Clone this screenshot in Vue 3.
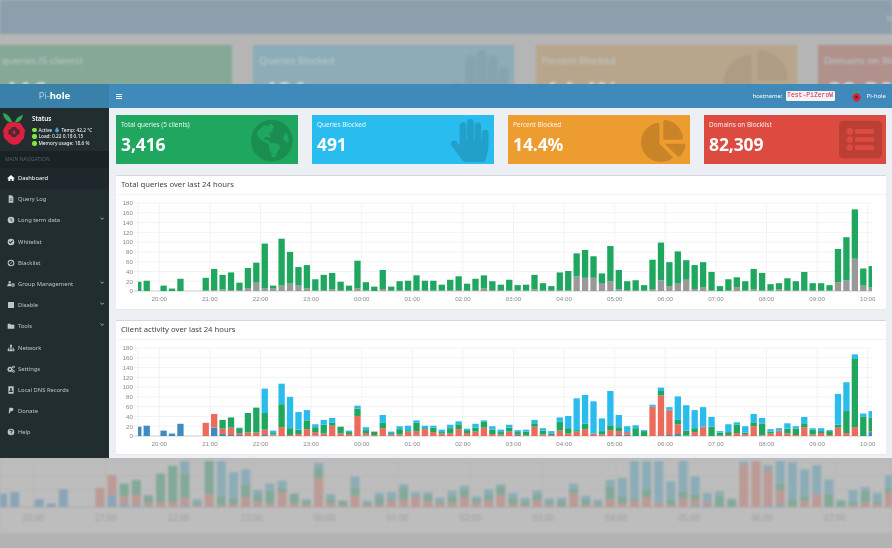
<template>
  <div class="stage">
    <!-- dimmed page behind the window -->
    <div class="backdrop" aria-hidden="true">
      <div class="bd_nav"><span class="bd_host">h</span></div>
      <div class="bd_cards">
        <div v-for="c in backCards" :key="c.label" class="bd_card" :class="c.cls">
          <div class="bd_label">{{ c.label }}</div>
          <div class="bd_num">{{ c.num }}</div>
          <svg v-if="c.d" class="bd_icon" :viewBox="c.vb"><path :d="c.d" /></svg>
        </div>
      </div>
      <div class="bd_chart">
        <svg width="892" height="72" viewBox="0 0 892 72">
          <line v-for="y in [1, 15, 29]" :key="y" x1="0" x2="892" :y1="y" :y2="y" class="bd_grid" />
          <line v-for="h in hours" :key="h.label" :x1="bdX(h.at)" :x2="bdX(h.at)" y1="0" y2="46" class="bd_grid" />
          <line x1="0" x2="892" y1="46" y2="46" class="bd_axis" />
          <rect
            v-for="(r, i) in backRects"
            :key="i"
            :x="r.x"
            :y="r.y"
            width="9"
            :height="r.h"
            :fill="r.fill"
          />
          <text v-for="h in hours" :key="h.label" :x="bdX(h.at)" y="60" text-anchor="middle" class="bd_tick">{{ h.label }}</text>
        </svg>
      </div>
      <div class="bd_foot" />
    </div>

    <!-- the admin window -->
    <div class="window">
      <header class="topbar">
        <div class="logo"><span>Pi-</span><b>hole</b></div>
        <div class="nav">
          <svg class="burger" viewBox="0 0 12 10"><path d="M0 0h12v2H0zM0 4h12v2H0zM0 8h12v2H0z" /></svg>
          <div class="nav_right">
            <span class="host_label">hostname:</span>
            <code class="host">Test-PiZeroW</code>
            <svg class="pi_small" viewBox="0 0 22 32">
              <path fill="#3db14b" d="M10 10C9 5 5 1 0 1c1 5 5 9 10 9zM12 9c1-4 4-7 9-8-1 5-4 8-9 8z" />
              <path fill="#d8203d" d="M11 8l7 3 4 8-3 8-8 5-7-5-4-8 4-8z" />
              <path fill="#4a2b30" d="M8 16h6v6H8z" />
            </svg>
            <span class="host_user">Pi-hole</span>
          </div>
        </div>
      </header>

      <div class="body">
        <aside class="side">
          <div class="panel">
            <svg class="pi" viewBox="0 0 22 32">
              <path fill="#2fa84f" d="M9.500 10C8 5 5 1 0 0c.5 5 3.500 9 9.500 10z" />
              <path fill="#2fa84f" d="M12 9.500c.5-3 3-6.500 8-7.500-1 4-3 7.500-8 7.500z" />
              <path fill="#dc1f3e" d="M11 9l6.500 1 4.500 7-1 8-5.500 6-4.500 1-5-2-5-5.500L0 17l4.500-7z" />
              <path fill="#4a2b30" d="M9 14h4l1 2 2.500 1v4L14 22l-1 2H9l-1-2-2.500-1v-4L8 16z" />
              <path fill="#dc1f3e" d="M9.800 17.500h2.400v3.500H9.800z" />
            </svg>
            <div class="panel_info">
              <div class="panel_title">Status</div>
              <div class="stat"><i class="dot" />Active
                <svg class="drop" viewBox="0 0 10 14"><path d="M5 0c2 4 5 6 5 9a5 5 0 0 1-10 0c0-3 3-5 5-9z" /></svg>
                Temp: 42.2 °C</div>
              <div class="stat"><i class="dot" />Load: 0.22 0.18 0.15</div>
              <div class="stat"><i class="dot" />Memory usage: 18.6 %</div>
            </div>
          </div>
          <div class="side_head">MAIN NAVIGATION</div>
          <ul class="menu">
            <li v-for="m in menu" :key="m.label" :class="{ active: m.active }">
              <svg class="m_icon" viewBox="0 0 24 24"><path :d="m.d" fill-rule="evenodd" /></svg>
              <span>{{ m.label }}</span>
              <svg v-if="m.sub" class="m_caret" viewBox="0 0 10 6"><path d="M1 1l4 4 4-4" /></svg>
            </li>
          </ul>
        </aside>

        <main class="content">
          <section class="kpis">
            <div v-for="c in cards" :key="c.label" class="kpi" :class="c.cls">
              <div class="kpi_label">{{ c.label }}</div>
              <div class="kpi_num">{{ c.num }}</div>
              <svg class="kpi_icon" :class="c.iconCls" :viewBox="c.vb"><path :d="c.d" /></svg>
            </div>
          </section>

          <section v-for="ch in charts" :key="ch.title" class="box">
            <h3 class="box_title">{{ ch.title }}</h3>
            <svg class="plot" width="770" height="114" viewBox="0 0 770 114">
              <line v-for="t in yTicks" :key="t.v" x1="18" x2="756" :y1="t.y" :y2="t.y" class="grid" />
              <line v-for="h in hours" :key="h.label" :x1="h.x" :x2="h.x" y1="8" y2="96" class="grid" />
              <line x1="22" x2="22" y1="8" y2="96" class="grid" />
              <line x1="18" x2="756" y1="96" y2="96" class="axis" />
              <rect
                v-for="(r, i) in ch.rects"
                :key="i"
                :x="r.x"
                :y="r.y"
                :width="r.w"
                :height="r.h"
                :fill="r.fill"
              />
              <text v-for="t in yTicks" :key="t.v" x="17" :y="t.y + 2.300" text-anchor="end" class="tick">{{ t.v }}</text>
              <text v-for="h in hours" :key="h.label" :x="h.x" y="106" text-anchor="middle" class="tick">{{ h.label }}</text>
            </svg>
          </section>
        </main>
      </div>
    </div>
  </div>
</template>

<script setup>
const total = [
  19, 21, 0, 11, 5, 25, 0, 0, 27, 45, 33, 38, 17, 47, 58, 97, 11, 107, 80, 49, 53, 24,
  33, 37, 19, 11, 62, 18, 9, 43, 9, 20, 21, 32, 21, 21, 13, 23, 30, 15, 25, 32, 20, 13,
  23, 12, 13, 33, 16, 10, 38, 41, 77, 84, 71, 36, 92, 43, 20, 22, 12, 64, 99, 59, 81, 63,
  53, 59, 39, 10, 24, 28, 20, 45, 37, 14, 16, 26, 20, 39, 16, 16, 12, 86, 110, 167, 46, 51,
];
const blocked = [
  0, 0, 0, 0, 0, 0, 0, 0, 1, 2, 3, 2, 2, 6, 17, 5, 5, 11, 15, 11, 5, 1,
  1, 3, 1, 1, 5, 1, 0, 4, 1, 1, 1, 2, 1, 1, 1, 1, 2, 1, 1, 5, 2, 1,
  1, 1, 1, 3, 1, 1, 2, 1, 30, 27, 27, 15, 20, 3, 2, 1, 1, 4, 22, 10, 15, 23,
  4, 8, 2, 0, 1, 8, 1, 3, 1, 1, 3, 1, 1, 1, 2, 1, 1, 18, 22, 66, 11, 7,
];
// blue, red, green per bar; the rest of the total is cyan
const clients = [
  [19, 0, 0], [21, 0, 0], [0, 0, 0], [11, 0, 0], [5, 0, 0], [25, 0, 0], [0, 0, 0], [0, 0, 0],
  [0, 27, 0], [17, 28, 0], [4, 11, 18], [2, 15, 21], [2, 4, 10], [0, 7, 40], [0, 7, 51], [2, 11, 34],
  [1, 2, 3], [0, 18, 47], [0, 2, 14], [0, 4, 9], [0, 14, 18], [1, 7, 10], [0, 5, 18], [0, 21, 6],
  [0, 5, 14], [0, 4, 4], [0, 41, 15], [1, 5, 6], [0, 2, 7], [0, 16, 11], [0, 3, 3], [0, 3, 11],
  [0, 9, 3], [1, 9, 17], [0, 14, 2], [0, 8, 9], [0, 5, 3], [0, 5, 11], [0, 14, 10], [0, 6, 6],
  [0, 9, 8], [0, 17, 12], [0, 4, 9], [0, 3, 5], [0, 9, 8], [2, 2, 4], [0, 1, 8], [0, 19, 7],
  [0, 3, 8], [0, 2, 3], [0, 11, 18], [0, 5, 11], [0, 9, 3], [0, 14, 11], [0, 5, 0], [0, 3, 7],
  [0, 12, 10], [2, 8, 8], [3, 5, 0], [0, 0, 16], [0, 0, 10], [0, 60, 0], [0, 83, 9], [2, 50, 2],
  [4, 20, 9], [0, 1, 10], [0, 8, 8], [0, 18, 1], [0, 0, 19], [1, 0, 6], [0, 2, 6], [0, 6, 17],
  [0, 4, 3], [0, 20, 8], [1, 1, 23], [0, 5, 4], [0, 10, 1], [0, 5, 10], [0, 2, 13], [0, 18, 8],
  [0, 3, 10], [0, 6, 4], [0, 2, 8], [0, 17, 6], [0, 6, 45], [0, 18, 141], [0, 0, 40], [8, 2, 27],
];

const BASE = 96;
const UNIT = 88 / 180;
const STEP = 8.43;
const LEFT = 22;
const RIGHT = 756;

const stackRects = (rows, colors) => {
  const out = [];
  rows.forEach((row, i) => {
    const cx = LEFT + 0.3 + i * STEP;
    const x0 = Math.max(LEFT, cx - 3.15);
    const x1 = Math.min(RIGHT, cx + 3.15);
    let y = BASE;
    row.forEach((v, s) => {
      if (!v) return;
      const h = v * UNIT;
      y -= h;
      out.push({ x: x0, y, w: x1 - x0, h, fill: colors[s] });
    });
  });
  return out;
};

const queryRows = total.map((t, i) => [blocked[i], t - blocked[i]]);
const clientRows = total.map((t, i) => {
  const [b, r, g] = clients[i];
  return [b, r, g, Math.max(0, t - b - r - g)];
});

const charts = [
  { title: "Total queries over last 24 hours", rects: stackRects(queryRows, ["#999999", "#1fa65f"]) },
  { title: "Client activity over last 24 hours", rects: stackRects(clientRows, ["#3f8bbd", "#ed6b5b", "#1fa65f", "#2bbcee"]) },
];

const yTicks = [180, 160, 140, 120, 100, 80, 60, 40, 20, 0].map((v) => ({ v, y: BASE - v * UNIT }));

const hourLabels = ["20:00", "21:00", "22:00", "23:00", "00:00", "01:00", "02:00", "03:00", "04:00", "05:00", "06:00", "07:00", "08:00", "09:00", "10:00"];
const hours = hourLabels.map((label, i) => ({ label, at: i, x: 43.3 + i * 50.6 }));

// the page behind is the same chart, larger
const bdX = (hour) => 33 + hour * 72.9;
const backColors = ["#8ba5b8", "#bc9a96", "#83a998", "#8cadb8"];
const backRects = [];
clientRows.forEach((row, i) => {
  const x = 33 + (i - 2.5) * 12.15 - 4.5;
  let y = 46;
  row.forEach((v, s) => {
    if (!v) return;
    const h = v * 0.71;
    y -= h;
    backRects.push({ x, y, h, fill: backColors[s] });
  });
});

const globe = "M248 8C111.03 8 0 119.03 0 256s111.03 248 248 248 248-111.03 248-248S384.97 8 248 8zm82.29 357.6c-3.9 3.88-7.99 7.95-11.31 11.28-2.99 3-5.1 6.7-6.17 10.71-1.51 5.66-2.73 11.38-4.77 16.87l-17.39 46.85c-13.76 3-28 4.69-42.65 4.69v-27.38c1.69-12.62-7.64-36.26-22.63-51.25-6-6-9.37-14.14-9.37-22.63v-32.01c0-11.64-6.27-22.34-16.46-27.97-14.37-7.95-34.81-19.06-48.81-26.11-11.48-5.78-22.1-13.14-31.65-21.75l-.8-.72a114.792 114.792 0 0 1-18.06-20.74c-9.38-13.77-24.66-36.42-34.59-51.14 20.47-45.5 57.36-82.04 103.2-101.89l24.01 12.01C203.48 89.74 216 82.01 216 70.11v-11.3c7.99-1.29 16.12-2.11 24.48-2.46l28.3 28.3c6.25 6.25 6.25 16.38 0 22.63L264 112l-10.34 10.34c-3.12 3.12-3.12 8.19 0 11.31l4.69 4.69c3.12 3.12 3.12 8.19 0 11.31l-8 8a8.008 8.008 0 0 1-5.66 2.34h-8.99c-2.08 0-4.08.81-5.58 2.27l-9.92 9.65a8.008 8.008 0 0 0-1.58 9.31l15.59 31.19c2.66 5.32-1.21 11.58-7.15 11.58h-5.64c-1.93 0-3.79-.7-5.24-1.96l-9.28-8.06a16.017 16.017 0 0 0-15.55-3.1l-31.17 10.39a11.95 11.95 0 0 0-8.17 11.34c0 4.53 2.56 8.66 6.61 10.69l11.08 5.54c9.41 4.71 19.79 7.16 30.31 7.16s22.59 27.29 32 32h66.75c8.49 0 16.62 3.37 22.63 9.37l13.69 13.69a30.503 30.503 0 0 1 8.93 21.57 46.536 46.536 0 0 1-13.72 32.98zM417 274.25c-5.79-1.45-10.84-5-14.15-9.97l-17.98-26.97a23.97 23.97 0 0 1 0-26.62l19.59-29.38c2.32-3.47 5.5-6.29 9.24-8.15l12.98-6.49C440.2 193.59 448 223.87 448 256c0 8.67-.74 17.16-1.82 25.54L417 274.25z";
const hand = "M408.781 128.007C386.356 127.578 368 146.36 368 168.79V256h-8V79.79c0-22.43-18.356-41.212-40.781-40.783C297.488 39.423 280 57.169 280 79v177h-8V40.79C272 18.36 253.644-.422 231.219.007 209.488.423 192 18.169 192 40v216h-8V80.79c0-22.43-18.356-41.212-40.781-40.783C121.488 40.423 104 58.169 104 80v235.992l-31.648-43.519c-12.993-17.866-38.009-21.817-55.877-8.823-17.865 12.994-21.815 38.01-8.822 55.877l125.601 172.705A48 48 0 0 0 171.073 512h197.59c22.274 0 41.622-15.324 46.724-37.006l26.508-112.66a192.011 192.011 0 0 0 5.104-43.975V168c.001-21.831-17.487-39.577-39.218-39.993z";
const pie = "M527.79 288H290.5l158.03 158.03c6.04 6.04 15.98 6.53 22.19.68 38.7-36.46 65.32-85.61 73.13-140.86 1.34-9.46-6.51-17.85-16.06-17.85zm-15.83-64.8C503.72 103.74 408.26 8.28 288.8.04 279.68-.59 272 7.1 272 16.24V240h223.77c9.14 0 16.82-7.68 16.19-16.8zM224 288V50.71c0-9.55-8.39-17.4-17.84-16.06C86.99 51.49-4.1 155.6.14 280.37 4.5 408.51 114.83 513.59 243.03 511.98c50.4-.63 96.97-16.87 135.26-44.03 7.9-5.6 8.42-17.23 1.57-24.08L224 288z";
const listAlt = "M464 480H48c-26.51 0-48-21.49-48-48V80c0-26.51 21.49-48 48-48h416c26.51 0 48 21.49 48 48v352c0 26.51-21.49 48-48 48zM128 120c-22.091 0-40 17.909-40 40s17.909 40 40 40 40-17.909 40-40-17.909-40-40-40zm0 96c-22.091 0-40 17.909-40 40s17.909 40 40 40 40-17.909 40-40-17.909-40-40-40zm0 96c-22.091 0-40 17.909-40 40s17.909 40 40 40 40-17.909 40-40-17.909-40-40-40zm288-136v-32c0-6.627-5.373-12-12-12H204c-6.627 0-12 5.373-12 12v32c0 6.627 5.373 12 12 12h200c6.627 0 12-5.373 12-12zm0 96v-32c0-6.627-5.373-12-12-12H204c-6.627 0-12 5.373-12 12v32c0 6.627 5.373 12 12 12h200c6.627 0 12-5.373 12-12zm0 96v-32c0-6.627-5.373-12-12-12H204c-6.627 0-12 5.373-12 12v32c0 6.627 5.373 12 12 12h200c6.627 0 12-5.373 12-12z";

const cards = [
  { label: "Total queries (5 clients)", num: "3,416", cls: "green", vb: "0 0 496 512", d: globe, iconCls: "i_globe" },
  { label: "Queries Blocked", num: "491", cls: "aqua", vb: "0 0 448 512", d: hand, iconCls: "i_hand" },
  { label: "Percent Blocked", num: "14.4%", cls: "amber", vb: "0 0 544 512", d: pie, iconCls: "i_pie" },
  { label: "Domains on Blocklist", num: "82,309", cls: "red", vb: "0 0 512 512", d: listAlt, iconCls: "i_list" },
];

const backCards = [
  { label: "Total queries (5 clients)", num: "3,416", cls: "bd_green" },
  { label: "Queries Blocked", num: "491", cls: "bd_aqua", vb: "0 0 448 512", d: hand },
  { label: "Percent Blocked", num: "14.4%", cls: "bd_amber", vb: "0 0 544 512", d: pie },
  { label: "Domains on Blocklist", num: "82,309", cls: "bd_red" },
];

const gear = (cx, cy, r) => {
  let d = "";
  const n = 8;
  for (let i = 0; i < n * 2; i++) {
    const a = (i * Math.PI) / n;
    const rad = i % 2 ? r * 0.78 : r;
    d += `${i ? "L" : "M"}${(cx + rad * Math.cos(a)).toFixed(1)} ${(cy + rad * Math.sin(a)).toFixed(1)}`;
  }
  const hole = r * 0.34;
  return `${d}zM${cx - hole} ${cy}a${hole} ${hole} 0 1 0 ${hole * 2} 0a${hole} ${hole} 0 1 0 ${-hole * 2} 0z`;
};

const menu = [
  { label: "Dashboard", active: true, d: "M12 3 1 12.500l1.500 1.700L4 13v8h6v-6h4v6h6v-8l1.500 1.200 1.500-1.700z" },
  { label: "Query Log", d: "M5 1h9l5 5v17H5zM8 11v1.500h8V11zM8 15v1.500h8V15z" },
  { label: "Long term data", sub: true, d: "M12 2a10 10 0 1 0 0 20 10 10 0 0 0 0-20zM11 6h2v6l4 3-1 1.500-5-3.500z" },
  { label: "Whitelist", d: "M12 2a10 10 0 1 0 0 20 10 10 0 0 0 0-20zM10.500 17l-5-5 2-2 3 3 6-6 2 2z" },
  { label: "Blacklist", d: "M12 2a10 10 0 1 0 0 20 10 10 0 0 0 0-20zm0 3a7 7 0 0 1 4.200 1.400L6.400 16.200A7 7 0 0 1 12 5zm0 14a7 7 0 0 1-4.200-1.400l9.800-9.800A7 7 0 0 1 12 19z" },
  { label: "Group Management", sub: true, d: "M8 3a3.500 3.500 0 1 0 0 7 3.500 3.500 0 0 0 0-7zM1 19v-3c0-3 3-5 7-5 2 0 3 .5 4 1v7zM" + gear(18, 15, 6).slice(1) },
  { label: "Disable", sub: true, d: "M4 3h16a1 1 0 0 1 1 1v16a1 1 0 0 1-1 1H4a1 1 0 0 1-1-1V4a1 1 0 0 1 1-1z" },
  { label: "Tools", sub: true, d: "M2 5h8l2 3h10v12H2z" },
  { label: "Network", d: "M9 2h6v6h-1.500v3H20v5h2v6h-6v-6h2v-3h-5v3h2v6H9v-6h2v-3H6v3h2v6H2v-6h2v-5h6.500V8H9z" },
  { label: "Settings", d: gear(9, 13, 9) + gear(19.5, 6, 4.5) + gear(19.5, 19, 4.5) },
  { label: "Local DNS Records", d: "M4 1h16v22H4zM12 6a3 3 0 1 0 0 6 3 3 0 0 0 0-6zM7 18h10v-2c0-1.500-2-3-5-3s-5 1.500-5 3z" },
  { label: "Donate", d: "M7 2h7c4 0 6 2 5 6-1 4-4 5-7 5h-2l-1 6H5z" },
  { label: "Help", d: "M12 2a10 10 0 1 0 0 20 10 10 0 0 0 0-20zM11 15h2.500v-1c0-1 3.500-2 3.500-5s-2.500-4-5-4-4.500 1.500-5 4l2.500.5c.3-1.500 1-2.300 2.500-2.300s2.300.7 2.300 1.800c0 2-3.300 2.500-3.300 5zM11 16.500V19h2.500v-2.500z" },
];
</script>

<style scoped>
.stage {
  position: relative;
  width: 892px;
  height: 548px;
  overflow: hidden;
  background: #b5b5b5;
  font-family: "Noto Sans", "Open Sans", sans-serif;
}

/* page behind */
.backdrop {
  position: absolute;
  inset: 0;
  display: flex;
  flex-direction: column;
  filter: blur(0.8px);
}
.bd_nav {
  height: 34px;
  flex: none;
  background: #8c9fac;
  position: relative;
}
.bd_host {
  position: absolute;
  right: 0;
  top: 12px;
  color: #b9c4cc;
  font-size: 9px;
}
.bd_cards {
  display: grid;
  grid-template-columns: 261px 261px 261px 261px;
  gap: 21.300px;
  margin: 11px 0 0 -29px;
  height: 80px;
  flex: none;
}
.bd_card {
  position: relative;
  overflow: hidden;
  height: 80px;
}
.bd_green { background: #85a897; }
.bd_aqua { background: #8cadb8; }
.bd_amber { background: #b8a68c; }
.bd_red { background: #b0918c; }
.bd_label {
  margin: 8px 0 0 6px;
  font-size: 9.800px;
  line-height: 15px;
  color: #bccac8;
}
.bd_num {
  margin: 5px 0 0 9px;
  font-size: 26px;
  font-weight: 700;
  line-height: 36px;
  color: #d5d5d5;
}
.bd_icon {
  position: absolute;
  right: 5px;
  top: 5px;
  height: 65px;
  fill: rgba(0, 0, 0, 0.05);
}
.bd_chart {
  flex: none;
  margin-top: 333px;
  height: 75px;
  background: #bdbdbd;
  overflow: hidden;
}
.bd_chart svg { display: block; margin-top: 3px; }
.bd_grid { stroke: #b9b7b5; stroke-width: 1; }
.bd_axis { stroke: #a8a8a8; stroke-width: 1; }
.bd_tick { font-size: 8.500px; fill: #a0a0a0; font-family: "Noto Sans", sans-serif; }
.bd_foot {
  flex: 1;
  background: #b3b3b3;
}

/* window */
.window {
  position: absolute;
  left: 0;
  right: 0;
  top: 84px;
  height: 374px;
  display: flex;
  flex-direction: column;
  background: #ecf0f5;
  filter: blur(0.4px);
}
.topbar {
  display: flex;
  height: 24px;
  flex: none;
  color: #fff;
}
.logo {
  width: 109px;
  flex: none;
  background: #3a81a9;
  text-align: center;
  font-size: 9.500px;
  line-height: 24px;
}
.logo span { font-weight: 300; opacity: 0.85; }
.nav {
  flex: 1;
  display: flex;
  align-items: center;
  justify-content: space-between;
  background: #3f8abb;
  padding: 0 6px 0 7px;
}
.burger {
  width: 6px;
  height: 5px;
  fill: #fff;
}
.nav_right {
  display: flex;
  align-items: center;
  font-size: 6px;
}
.host {
  margin-left: 3px;
  padding: 1.500px 1.500px;
  background: #f9f2f4;
  color: #c7254e;
  font-family: "Liberation Mono", monospace;
  font-size: 6.400px;
  line-height: 6.500px;
  border-radius: 1px;
}
.pi_small {
  width: 9px;
  height: 12px;
  margin: 0 6px 0 17px;
}

.body {
  flex: 1;
  display: flex;
  min-height: 0;
}
.side {
  width: 109px;
  flex: none;
  background: #222d30;
  color: #b8c7ce;
}
.panel {
  height: 42.500px;
  display: flex;
  padding: 5px 0 0 3px;
  box-sizing: border-box;
}
.pi {
  width: 22px;
  height: 32px;
  flex: none;
}
.panel_info {
  margin-left: 7px;
  padding-top: 1px;
  color: #fff;
}
.panel_title {
  font-size: 6.300px;
  font-weight: 600;
  line-height: 10px;
  margin-bottom: 2.500px;
}
.stat {
  display: flex;
  align-items: center;
  font-size: 4.800px;
  line-height: 6.800px;
  white-space: pre;
}
.dot {
  width: 4.500px;
  height: 4.500px;
  border-radius: 50%;
  background: #7ced3f;
  margin-right: 2px;
}
.drop {
  width: 4px;
  height: 5.500px;
  fill: #4a9fd6;
  margin: 0 1.500px;
}
.side_head {
  height: 17px;
  background: #1a2226;
  color: #4b646f;
  font-size: 5px;
  line-height: 17px;
  padding-left: 5px;
}
.menu {
  list-style: none;
  margin: 0;
  padding: 0;
}
.menu li {
  height: 21.200px;
  display: flex;
  align-items: center;
  padding: 0 5px 0 6.500px;
  font-size: 5.800px;
  position: relative;
}
.menu li.active {
  background: #1e282c;
  color: #fff;
}
.m_icon {
  width: 8px;
  height: 8px;
  fill: currentColor;
  margin-right: 3.500px;
  flex: none;
}
.m_caret {
  width: 4.500px;
  height: 3px;
  fill: none;
  stroke: currentColor;
  stroke-width: 1.800;
  margin-left: auto;
  margin-top: -3px;
}

.content {
  flex: 1;
  min-width: 0;
  padding: 7px 6px 0 7px;
}
.kpis {
  display: grid;
  grid-template-columns: repeat(4, 1fr);
  gap: 14px;
  margin-bottom: 11px;
}
.kpi {
  position: relative;
  height: 49px;
  color: #fff;
  padding: 5px 0 0 5px;
  box-sizing: border-box;
  overflow: hidden;
}
.green { background: #1fa65f; }
.aqua { background: #29bcee; }
.amber { background: #ed9c30; }
.red { background: #dd4b40; }
.kpi_label {
  font-size: 6.400px;
  line-height: 10px;
  opacity: 0.9;
}
.kpi_num {
  font-size: 17.500px;
  font-weight: 700;
  line-height: 25px;
  margin-top: 2px;
  letter-spacing: -0.1px;
}
.kpi_icon {
  position: absolute;
  fill: rgba(0, 0, 0, 0.15);
}
.i_globe { right: 5px; top: 4px; height: 43px; }
.i_hand { right: 5px; top: 4px; height: 43px; }
.i_pie { right: 4px; top: 5px; height: 42px; }
.i_list { right: 4px; top: 3px; height: 43px; }

.box {
  background: #fff;
  border-top: 1px solid #d2d6de;
  border-radius: 1px;
  height: 134px;
  margin-bottom: 11px;
  box-sizing: border-box;
  box-shadow: 0 0.500px 0.500px rgba(0, 0, 0, 0.06);
}
.box_title {
  margin: 0;
  height: 19px;
  padding-left: 5px;
  font-size: 7.700px;
  font-weight: 400;
  line-height: 16.500px;
  color: #444;
  border-bottom: 0.500px solid #f4f4f4;
  box-sizing: border-box;
}
.plot {
  display: block;
}
.grid {
  stroke: #f0f0f0;
  stroke-width: 0.800;
}
.axis {
  stroke: #c9c9c9;
  stroke-width: 0.800;
}
.tick {
  font-size: 6.200px;
  fill: #8a8a8a;
  font-family: "Liberation Sans", Arial, sans-serif;
}
</style>
